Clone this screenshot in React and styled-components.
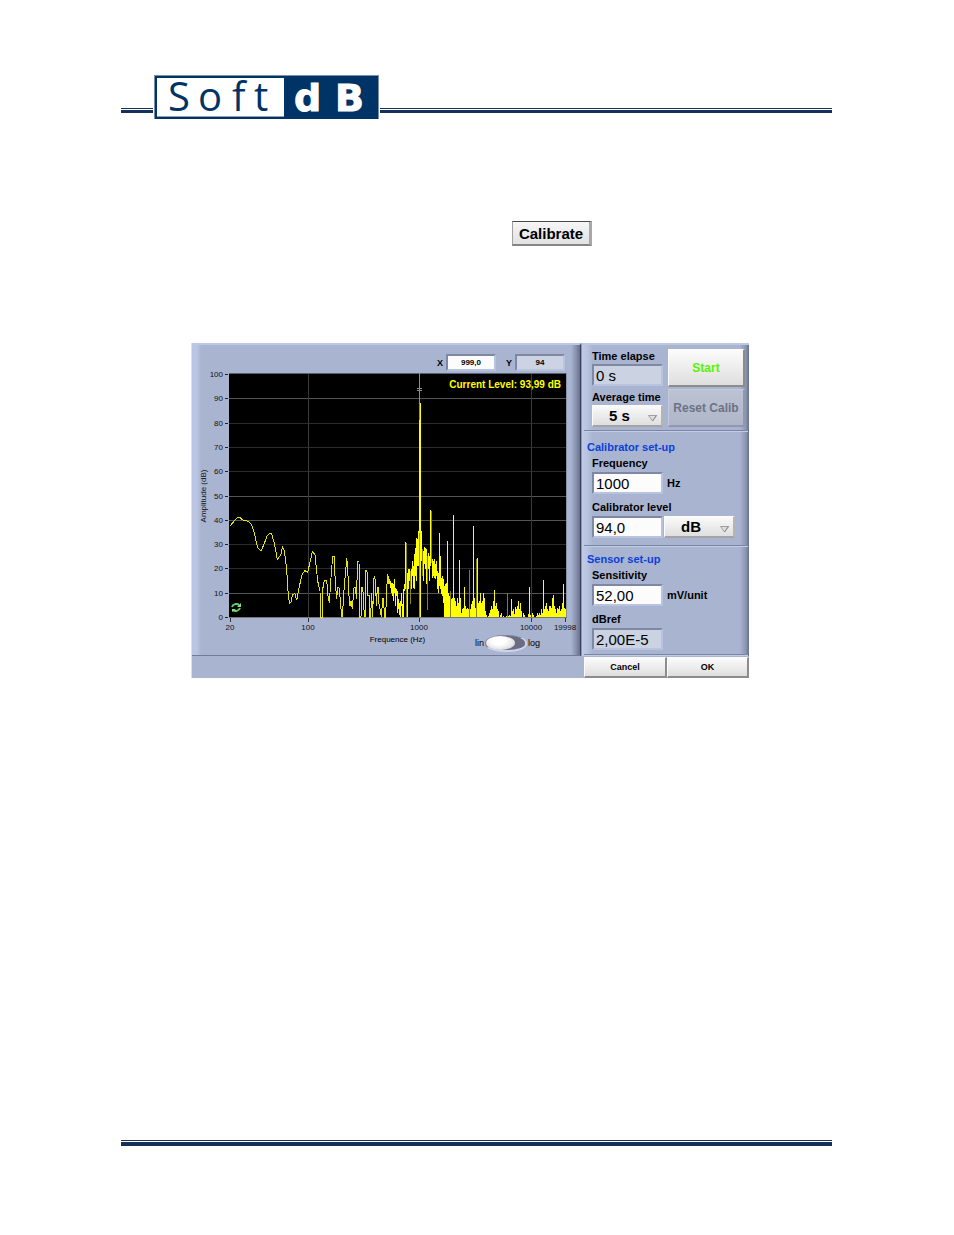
import React, { useState } from "react";
import styled, { createGlobalStyle } from "styled-components";

const NAVY = "#003366";
const RULE = "#17305a";
const PANEL = "#a9b4d0";
const SANS = '"Liberation Sans", Arial, sans-serif';

const GlobalStyle = createGlobalStyle`
  *, *::before, *::after { box-sizing: border-box; }
  body { margin: 0; background: #fff; font-family: ${SANS}; color: #000; }
`;

const Page = styled.div`
  min-height: 100vh;
  display: flex;
  flex-direction: column;
  padding: 75px 122px 89px 121px;
`;

const HeaderRule = styled.div`
  flex: ${(p) => (p.$lead ? "0 0 32px" : "1")};
  height: 5px;
  margin-bottom: 6px;
  border-top: 1px solid ${RULE};
  border-bottom: 3px solid ${RULE};
`;

const Footer = styled.footer`
  height: 6px;
  border-top: 1px solid ${RULE};
  border-bottom: 4px solid ${RULE};
`;

const Header = styled.header`
  display: flex;
  align-items: flex-end;
  gap: 1px;
  height: 44px;
`;

const Logo = styled.svg`
  display: block;
  flex: none;
  width: 225px;
  height: 44px;
  overflow: visible;
`;

const Content = styled.main`
  flex: 1;
`;

const CalibrateRow = styled.div`
  padding: 102px 0 97px 55%;
`;

const Button = styled.button`
  display: block;
  margin: 0;
  padding: 0;
  font-family: inherit;
  font-weight: bold;
  color: #000;
  border-style: solid;
  border-width: 1px 2px 2px 1px;
  border-color: #fcfcfc #8c8c8c #8c8c8c #fcfcfc;
  background: linear-gradient(#fcfcfc, #dedede);
`;

const CalibrateButton = styled(Button)`
  width: 80px;
  height: 25px;
  font-size: 15px;
  border-width: 1px 3px 2px 1px;
  border-color: #484848 #a8a8a8 #858585 #a0a0a0;
  background: linear-gradient(#f6f6f6, #e2e2e2);
`;

const Dialog = styled.section`
  margin: 0 83px 0 70px;
  display: grid;
  grid-template-columns: minmax(0, 1fr) 168px;
  background: ${PANEL};
  border-left: 1px solid #d9dff0;
`;

const GraphPanel = styled.div`
  display: flex;
  flex-direction: column;
  padding: 9px 13px 0 8px;
  border-top: 2px solid #bcc7e3;
  border-right: 1px solid #3c4358;
  border-bottom: 1px solid #727c98;
  background: linear-gradient(to right, #bac5e3 0 5px, transparent 9px),
    linear-gradient(to left, #66708b, #8792b0 4px, transparent 9px);
`;

const Readouts = styled.div`
  display: flex;
  align-items: flex-start;
  justify-content: flex-end;
  gap: 10px;
  padding-right: 2px;
  height: 19px;
`;

const ReadoutLabel = styled.label`
  display: flex;
  align-items: center;
  gap: 3px;
  font-size: 9px;
  font-weight: bold;
`;

const fieldEdge = `
  border: solid;
  border-width: 2px;
  border-color: #7e88a5 #b8c3df #b8c3df #7e88a5;
  border-radius: 0;
  margin: 0;
  font-family: inherit;
  color: #000;
  outline: none;
`;

const ReadoutInput = styled.input`
  ${fieldEdge}
  width: 50px;
  height: 17px;
  padding: 0;
  text-align: center;
  font-size: 8px;
  font-weight: bold;
  background: ${(p) => (p.readOnly ? "#ccd3e2" : "#fcfcfc")};
`;

const Chart = styled.svg`
  display: block;
  width: 100%;
  height: auto;
  overflow: visible;
  font-family: ${SANS};
  font-size: 8px;
  fill: #111;
`;

const AxisRow = styled.div`
  display: grid;
  grid-template-columns: 1fr auto 1fr;
  padding-left: 28px;
  height: 21px;
  font-size: 8px;
  line-height: 12px;
`;

const ScaleSwitch = styled.label`
  grid-column: 3;
  justify-self: end;
  display: flex;
  align-items: center;
  gap: 1px;
  height: 18px;
  padding-right: 27px;
  font-size: 9px;
`;

const SwitchInput = styled.input`
  appearance: none;
  position: relative;
  width: 42px;
  height: 17px;
  margin: 0;
  border-radius: 20px / 8px;
  background: #6b6c82;
  border: solid;
  border-width: 1px 2px 2px 1px;
  border-color: #7d86a2 #ccd5ec #ccd5ec #7d86a2;

  &::before {
    content: "";
    position: absolute;
    top: 0;
    left: ${(p) => (p.checked ? 10 : 0)}px;
    width: 29px;
    height: 14px;
    border-radius: 50%;
    background: radial-gradient(ellipse at 45% 35%, #fff 30%, #e4e4e4 65%, #b4b4b4);
  }
`;

const SettingsPanel = styled.form`
  display: flex;
  flex-direction: column;
  border-top: 2px solid #bcc7e3;
  border-left: 1px solid #8d98b5;
  background: linear-gradient(to right, #c0cae6 0, #b9c4e1 5px, transparent 11px),
    linear-gradient(to left, #66708b 0, #8994b1 3px, transparent 9px);
`;

const Section = styled.fieldset`
  display: flex;
  flex-direction: column;
  gap: 2px;
  min-width: 0;
  margin: 0 1px 0 2px;
  border: 0;
  border-bottom: 1px solid #7b86a4;
  box-shadow: 0 1px #c2cce6;
  padding: ${(p) => (p.$tight ? "6px 0 4px 8px" : "9px 0 7px 8px")};
`;

const TimingSection = styled(Section)`
  flex-direction: row;
  justify-content: space-between;
  padding: 4px 3px 3px 8px;
`;

const FieldGroup = styled.div`
  display: flex;
  flex-direction: column;
  gap: 2px;

  & + & { margin-top: 4px; }
`;

const TimingFields = styled.div`
  display: flex;
  flex-direction: column;

  ${FieldGroup} { gap: 1px; }
`;

const TimingActions = styled.div`
  display: flex;
  flex-direction: column;
  gap: 2px;
`;

const SectionTitle = styled.h2`
  margin: 0 0 0 -5px;
  font-size: 11px;
  line-height: 14px;
  color: #0a3fdc;
`;

const Label = styled.label`
  font-size: 11px;
  font-weight: bold;
  line-height: 14px;
  white-space: nowrap;
`;

const FieldRow = styled.div`
  display: flex;
  align-items: center;
  gap: 1px;
`;

const Unit = styled.span`
  padding-left: 3px;
  font-size: 11px;
  font-weight: bold;
`;

const Field = styled.input`
  ${fieldEdge}
  width: 71px;
  height: 22px;
  padding: 0 0 0 2px;
  font-size: 15px;
  background: ${(p) => (p.readOnly ? "#cbd2e1" : "#fcfcfc")};
`;

const SelectBox = styled.div`
  position: relative;
  width: 71px;
  height: 22px;
`;

const Select = styled.select`
  appearance: none;
  display: block;
  width: 100%;
  height: 100%;
  margin: 0;
  padding: 0 0 0 16px;
  border: solid;
  border-width: 1px 2px 2px 1px;
  border-color: #fcfcfc #b4b4b4 #a4a4a4 #fcfcfc;
  border-radius: 0;
  background: linear-gradient(#fafafa, #dfdfdf);
  font-family: inherit;
  font-size: 15px;
  font-weight: bold;
  color: #000;
`;

const Arrow = styled.svg`
  position: absolute;
  right: 6px;
  bottom: 5px;
  width: 9px;
  height: 7px;
  pointer-events: none;
`;

const ActionButton = styled(Button)`
  width: 77px;
  height: 38px;
  font-size: 12px;
  color: ${(p) => (p.disabled ? "#6d7285" : "#55f500")};
  ${(p) =>
    p.disabled &&
    `background: linear-gradient(#bcc3d3, #aeb6c8);
     border-color: #c3cada #8f98b0 #8f98b0 #c3cada;`}
`;

const DialogFooter = styled.div`
  grid-column: 1 / -1;
  display: flex;
  justify-content: flex-end;
  padding-top: 1px;
`;

const FooterButton = styled(Button)`
  width: ${(p) => (p.$wide ? 83 : 82)}px;
  height: 21px;
  font-size: 9px;
`;

// Spectrum trace below 600 Hz: [x, height], three units to a plot pixel.
const CURVE = [
  [3,273],[18,291],[26,298],[33,298],[43,290],[58,287],[68,276],[76,251],[86,208],[96,198],
  [105,218],[115,245],[121,250],[128,249],[135,225],[145,173],[155,185],[160,210],[166,198],
  [173,143],[178,63],[182,41],[186,45],[191,68],[198,70],[203,50],[210,88],[220,130],[228,139],
  [236,133],[243,165],[250,195],[258,187],[266,108],[273,78],[274,0],[280,0],[281,83],[286,109],
  [293,111],[297,63],[301,43],[306,118],[311,183],[315,183],[319,103],[323,53],[326,89],[331,87],
  [336,23],[339,0],[343,43],[346,98],[350,133],[353,178],[356,148],[359,73],[363,33],[366,48],
  [370,25],[375,88],[380,88],[382,53],[386,168],[390,168],[391,0],[396,0],[397,88],[401,88],
  [403,63],[406,3],[409,3],[411,141],[415,133],[416,65],[420,65],[422,0],[425,0],[428,73],
  [431,0],[434,113],[437,123],[440,98],[442,33],[445,88],[449,88],[450,38],[453,23],[457,0],
  [461,55],[464,55],[466,0],[470,0],[473,83],[476,130],[480,98],[483,113],
];

// Upper band, one column per pixel: [top, bottom] heights of the trace.
const COLUMNS = [
  [108,88],[103,73],[103,63],[98,48],[113,73],[88,33],[85,63],[78,13],[55,23],[43,5],[48,0],[73,33],
  [38,0],[83,0],[98,78],[226,83],[223,0],[133,0],[145,83],[143,108],[138,38],[143,83],[168,123],
  [153,88],[188,83],[208,123],[238,108],[233,153],[258,153],[593,0],[641,0],[258,168],[203,123],
  [198,108],[211,158],[208,143],[203,98],[183,20],[193,143],[183,108],[320,153],[318,163],
  [173,118],[168,123],[173,118],[158,113],[168,123],[138,83],[133,73],[253,93],[183,83],[118,68],
  [123,63],[113,43],[93,0],[98],[103],[229],[73],[63],[78],[53],[58],[306],[58],[48],[33],[58],
  [43],[170],[58],[13],[23],[28],[90],[33],[23],[28],[23],[140],[23],[38],[48],[273],[58],[28],
  [173],[176],[43],[48],[73],[43],[48],[73],[58],[18],[5],[0],[3],[13],[20],[33],[23],[48],[80],
  [33],[43],[23],[18],[0],[5],[11],[0],[3],[0],[0],[3],[71],[3],[5],[3],[53],[18],[23],[8],[31],
  [23],[33],[48],[23],[43],[18],[0],[13],[5],[0],[0],[0],[8],[91],[5],[0],[13],[5],[0],[0],[3],
  [11],[5],[13],[5],[23],[13],[110],[23],[33],[43],[23],[18],[33],[33],[28],[58],[66],[33],[23],
  [13],[28],[23],[33],[18],[23],[43],[98],[28],[25],
];
const DIM = new Set([16, 20, 32, 37, 41, 60, 79, 86, 117]);

const columnPath = (dim) =>
  COLUMNS.map(([top, bottom = 0], i) =>
    top > 0 && DIM.has(i) === dim ? `M${483 + i * 3} ${-bottom}v${bottom - top}h3v${top - bottom}z` : ""
  ).join("");

const curvePath = "M" + CURVE.map(([x, h]) => `${x} ${-h}`).join("L");

// Plot area inside the chart drawing.
const PLOT = { left: 29, top: 0, width: 338, height: 245 };
const Y_TICKS = [
  [100, 1], [90, 25], [80, 50], [70, 74], [60, 98], [50, 123], [40, 147], [30, 171], [20, 195], [10, 220], [0, 244],
];
const BRIGHT = [90, 50, 40, 10];
const X_TICKS = [["20", 30], ["100", 108], ["1000", 219], ["10000", 331], ["19998", 365]];

function SoftDbLogo() {
  return (
    <Logo viewBox="0 0 225 44" role="img" aria-label="Soft dB">
      <rect width="225" height="44" fill="#7890a9" />
      <rect x="1" y="1" width="223" height="43" fill={NAVY} />
      <rect x="3" y="3" width="127" height="39" fill="#8ea3b8" />
      <rect x="3" y="3" width="127" height="38" fill="#fff" />
      <text
        x="14 44 78 100"
        y="36"
        fontFamily='"Open Sans", sans-serif'
        fontSize="40"
        fill={NAVY}
      >
        Soft
      </text>
      <text
        x="140 181"
        y="36"
        fontFamily='"DejaVu Sans", sans-serif'
        fontWeight="bold"
        fontSize="38"
        fill="#fff"
        stroke="#fff"
      >
        dB
      </text>
    </Logo>
  );
}

function Spectrum() {
  const bottom = PLOT.top + PLOT.height;
  const right = PLOT.left + PLOT.width;
  return (
    <Chart viewBox="0 0 367 261" role="img" aria-label="Amplitude spectrum">
      <rect x={PLOT.left} y={PLOT.top} width={PLOT.width} height={PLOT.height} fill="#000" />
      <g shapeRendering="crispEdges">
        {Y_TICKS.map(([v, y]) => (
          <g key={v}>
            {v > 0 && v < 100 && (
              <rect x={PLOT.left} y={y} width={PLOT.width} height="1" fill={BRIGHT.includes(v) ? "#555" : "#2c2c2c"} />
            )}
            <rect x="25" y={y} width="3" height="1" fill="#222" />
          </g>
        ))}
        {X_TICKS.map(([t, x]) => (
          <g key={t}>
            {x > 30 && x < 365 && <rect x={x} y={PLOT.top} width="1" height={PLOT.height} fill="#3a3a3a" />}
            <rect x={x} y={bottom} width="1" height="4" fill="#333" />
          </g>
        ))}
        <rect x={PLOT.left} y={PLOT.top} width={PLOT.width} height="1" fill="#566070" />
        <rect x={right - 1} y={PLOT.top} width="1" height={PLOT.height} fill="#8a93a8" />
        <rect x={PLOT.left} y={bottom - 1} width={PLOT.width} height="1" fill="#777" />
      </g>
      <g transform={`translate(${PLOT.left} ${bottom - 1}) scale(0.33333333)`}>
        <path d={curvePath} fill="none" stroke="#e6e600" strokeWidth="3" shapeRendering="crispEdges" />
        <path d={columnPath(false)} fill="#ff0" shapeRendering="crispEdges" />
        <path d={columnPath(true)} fill="#858500" shapeRendering="crispEdges" />
      </g>
      <g shapeRendering="crispEdges" fill="#8d8d8d">
        <rect x="219" y="0" width="1" height="47" />
        <rect x="219" y="160" width="1" height="85" />
        <rect x="217" y="15" width="5" height="1" />
        <rect x="217" y="17" width="5" height="1" />
      </g>
      <text x="361" y="15" textAnchor="end" fontSize="10" fontWeight="bold" fill="#ff0">Current Level: 93,99 dB</text>
      {Y_TICKS.map(([v, y]) => (
        <text key={v} x="23" y={y + 3} textAnchor="end">{v}</text>
      ))}
      {X_TICKS.map(([t, x]) => (
        <text key={t} x={x} y="257" textAnchor="middle">{t}</text>
      ))}
      <text transform="translate(6 123) rotate(-90)" textAnchor="middle">Amplitude (dB)</text>
      <g fill="none" stroke="#62d262" strokeWidth="2">
        <path d="M32 234c1-3 5-4 7-2M40 235c-1 3-5 4-7 2" />
        <path d="M37 234h4v-4zM36 236h-4v3z" fill="#8be08b" stroke="none" />
      </g>
    </Chart>
  );
}

function Dropdown({ id, value, ariaLabel }) {
  return (
    <SelectBox>
      <Select id={id} aria-label={ariaLabel} defaultValue={value}>
        <option>{value}</option>
      </Select>
      <Arrow viewBox="0 0 9 7">
        <path d="M.5.5h8L4.500 6z" fill="#ddd" stroke="#a0a0a0" />
        <path d="M8.500.5L4.500 6" stroke="#888" />
      </Arrow>
    </SelectBox>
  );
}

function LabelledField({ id, label, value, unit, readOnly, children }) {
  return (
    <FieldGroup>
      <Label htmlFor={id}>{label}</Label>
      <FieldRow>
        <Field id={id} defaultValue={value} readOnly={readOnly} />
        {unit && <Unit>{unit}</Unit>}
        {children}
      </FieldRow>
    </FieldGroup>
  );
}

export default function App() {
  const [linear, setLinear] = useState(false);
  return (
    <Page>
      <GlobalStyle />
      <Header>
        <HeaderRule $lead />
        <SoftDbLogo />
        <HeaderRule />
      </Header>
      <Content>
        <CalibrateRow>
          <CalibrateButton type="button">Calibrate</CalibrateButton>
        </CalibrateRow>
        <Dialog aria-label="Calibration">
          <GraphPanel>
            <Readouts>
              <ReadoutLabel>X <ReadoutInput defaultValue="999,0" /></ReadoutLabel>
              <ReadoutLabel>Y <ReadoutInput defaultValue="94" readOnly /></ReadoutLabel>
            </Readouts>
            <Spectrum />
            <AxisRow>
              <span />
              <span>Frequence (Hz)</span>
              <ScaleSwitch>
                lin
                <SwitchInput type="checkbox" role="switch" checked={linear} onChange={() => setLinear(!linear)} />
                log
              </ScaleSwitch>
            </AxisRow>
          </GraphPanel>
          <SettingsPanel onSubmit={(e) => e.preventDefault()}>
            <TimingSection>
              <TimingFields>
                <LabelledField id="elapse" label="Time elapse" value="0 s" readOnly />
                <FieldGroup>
                  <Label htmlFor="average">Average time</Label>
                  <Dropdown id="average" value="5 s" />
                </FieldGroup>
              </TimingFields>
              <TimingActions>
                <ActionButton type="button">Start</ActionButton>
                <ActionButton type="button" disabled>Reset Calib</ActionButton>
              </TimingActions>
            </TimingSection>
            <Section>
              <SectionTitle>Calibrator set-up</SectionTitle>
              <LabelledField id="frequency" label="Frequency" value="1000" unit="Hz" />
              <LabelledField id="level" label="Calibrator level" value="94,0">
                <Dropdown ariaLabel="Level unit" value="dB" />
              </LabelledField>
            </Section>
            <Section $tight>
              <SectionTitle>Sensor set-up</SectionTitle>
              <LabelledField id="sensitivity" label="Sensitivity" value="52,00" unit="mV/unit" />
              <LabelledField id="dbref" label="dBref" value="2,00E-5" readOnly />
            </Section>
          </SettingsPanel>
          <DialogFooter>
            <FooterButton type="button" $wide>Cancel</FooterButton>
            <FooterButton type="button">OK</FooterButton>
          </DialogFooter>
        </Dialog>
      </Content>
      <Footer />
    </Page>
  );
}
